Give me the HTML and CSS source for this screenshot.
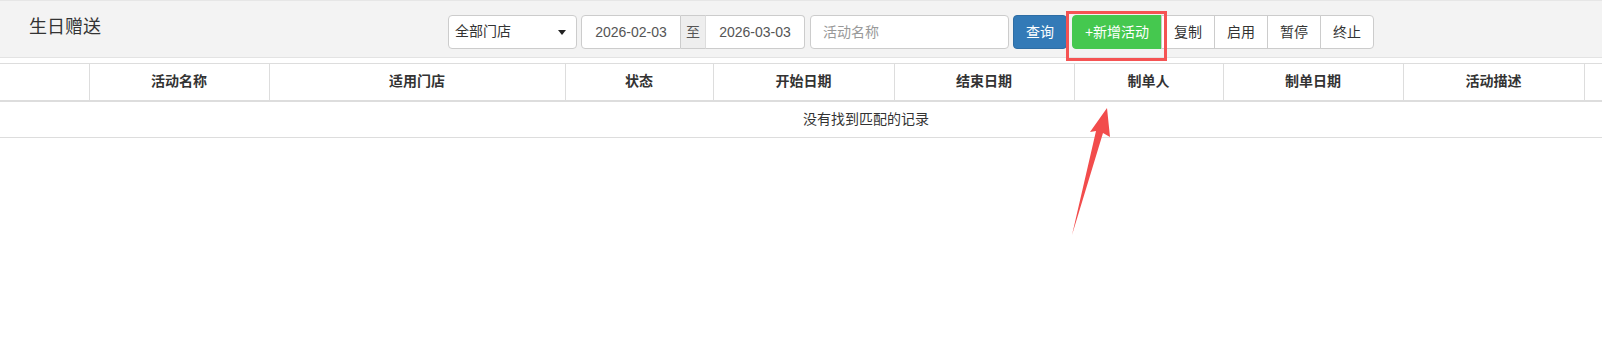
FILE: index.html
```html
<!DOCTYPE html>
<html lang="zh-CN">
<head>
    <meta charset="UTF-8">
    <meta name="viewport" content="width=device-width, initial-scale=1.0">
    <title>生日赠送</title>
    <link rel="stylesheet" href="styles.css">
</head>
<body>
    <div class="page-header">
        <h4 class="page-title">生日赠送</h4>
        <div class="toolbar">
            <div class="select-box">
                <span>全部门店</span>
                <span class="caret"></span>
            </div>
            <div class="date-group">
                <input class="date-input" type="text" value="2026-02-03">
                <span class="addon">至</span>
                <input class="date-input" type="text" value="2026-03-03">
            </div>
            <input class="name-input" type="text" placeholder="活动名称">
            <button class="btn btn-primary">查询</button>
            <div class="btn-group">
                <button class="btn btn-add">+新增活动</button>
                <button class="btn">复制</button>
                <button class="btn">启用</button>
                <button class="btn">暂停</button>
                <button class="btn">终止</button>
            </div>
        </div>
    </div>
    <div class="table-wrap">
        <table class="data-table">
            <colgroup>
                <col style="width: 89px">
                <col style="width: 180px">
                <col style="width: 296px">
                <col style="width: 148px">
                <col style="width: 181px">
                <col style="width: 180px">
                <col style="width: 149px">
                <col style="width: 180px">
                <col style="width: 181px">
                <col style="width: 148px">
            </colgroup>
            <thead>
                <tr>
                    <th></th>
                    <th>活动名称</th>
                    <th>适用门店</th>
                    <th>状态</th>
                    <th>开始日期</th>
                    <th>结束日期</th>
                    <th>制单人</th>
                    <th>制单日期</th>
                    <th>活动描述</th>
                    <th></th>
                </tr>
            </thead>
            <tbody>
                <tr>
                    <td colspan="10">没有找到匹配的记录</td>
                </tr>
            </tbody>
        </table>
    </div>

    <!-- annotation overlay -->
    <div class="highlight-box"></div>
    <svg class="arrow" width="1602" height="360" viewBox="0 0 1602 360">
        <polygon points="1107,108 1110,137 1103,133 1072,235 1096,131 1090,132" fill="#f24c4c"/>
    </svg>
</body>
</html>
```

FILE: styles.css
```css
html {
    overflow: hidden;
}
body {
    margin: 0;
    min-height: 360px;
    font-family: "Liberation Sans", "Noto Sans CJK SC", sans-serif;
    font-size: 14px;
    line-height: 1.42857;
    color: #333;
    background: #fff;
    position: relative;
}
.page-header {
    display: flex;
    align-items: flex-start;
    height: 42px;
    padding: 14px 0 0 29px;
    background: #f3f3f3;
    border-top: 1px solid #e6e6e6;
    border-bottom: 1px solid #e3e3e3;
}
.page-title {
    margin: 0;
    font-size: 18px;
    font-weight: normal;
    line-height: 24px;
    color: #333;
    width: 72px;
}
.toolbar {
    display: flex;
    align-items: flex-start;
    margin-left: 347px;
}
.select-box {
    box-sizing: border-box;
    display: flex;
    align-items: center;
    justify-content: space-between;
    width: 129px;
    height: 34px;
    padding: 0 10px 0 6px;
    background: #fff;
    border: 1px solid #ccc;
    border-radius: 4px;
    color: #333;
}
.caret {
    width: 0;
    height: 0;
    border-left: 4px solid transparent;
    border-right: 4px solid transparent;
    border-top: 5px solid #222;
}
.date-group {
    display: flex;
    margin-left: 4px;
}
.date-input, .name-input {
    box-sizing: border-box;
    height: 34px;
    border: 1px solid #ccc;
    font-family: inherit;
    font-size: 14px;
    color: #555;
    background: #fff;
    outline: none;
}
.date-input {
    width: 100px;
    text-align: center;
    padding: 0;
}
.date-input:first-child {
    border-radius: 4px 0 0 4px;
}
.date-input:last-child {
    width: 99px;
    border-radius: 0 4px 4px 0;
    border-left: none;
}
.addon {
    box-sizing: border-box;
    width: 25px;
    height: 34px;
    line-height: 32px;
    text-align: center;
    background: #eee;
    border: 1px solid #ccc;
    border-left: none;
    border-right: 1px solid #ddd;
    color: #555;
}
.name-input {
    width: 199px;
    margin-left: 5px;
    padding: 0 12px;
    border-radius: 4px;
}
.name-input::placeholder {
    color: #999;
}
.btn {
    box-sizing: border-box;
    height: 34px;
    padding: 0;
    font-family: inherit;
    font-size: 14px;
    line-height: 32px;
    white-space: nowrap;
    color: #333;
    background: #fff;
    border: 1px solid #ccc;
    border-radius: 4px;
    cursor: pointer;
}
.btn-primary {
    width: 54px;
    margin-left: 4px;
    color: #fff;
    background: #337ab7;
    border-color: #2e6da4;
}
.btn-group {
    display: flex;
    margin-left: 5px;
}
.btn-group .btn {
    width: 54px;
    border-radius: 0;
    margin-left: -1px;
}
.btn-group .btn:first-child {
    margin-left: 0;
}
.btn-group .btn:last-child {
    border-radius: 0 4px 4px 0;
}
.btn-group .btn-add {
    width: 90px;
    color: #fff;
    background: #45c84f;
    border-color: #45c84f;
    border-radius: 4px 0 0 4px;
}
.table-wrap {
    margin-top: 5px;
    width: 1602px;
    overflow: hidden;
}
.data-table {
    table-layout: fixed;
    border-collapse: collapse;
    width: 1732px;
}
.data-table th {
    height: 36px;
    padding: 0 8px;
    font-weight: bold;
    text-align: center;
    border-top: 1px solid #ddd;
    border-left: 1px solid #ddd;
    border-bottom: 2px solid #ddd;
    white-space: nowrap;
}
.data-table th:first-child {
    border-left: none;
}
.data-table td {
    height: 35px;
    padding: 0 8px;
    text-align: center;
    border-bottom: 1px solid #ddd;
}
.highlight-box {
    position: absolute;
    left: 1066px;
    top: 11px;
    width: 95px;
    height: 44px;
    border: 3px solid #f55353;
}
.arrow {
    position: absolute;
    left: 0;
    top: 0;
    pointer-events: none;
}
```
